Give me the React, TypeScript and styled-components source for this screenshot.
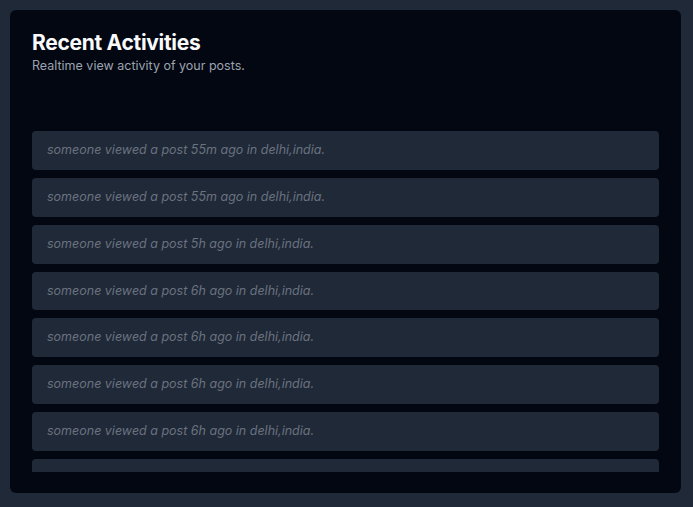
import React from 'react'
import styled, { createGlobalStyle } from 'styled-components'

const GlobalStyle = createGlobalStyle`
  html, body {
    margin: 0;
    padding: 0;
    background: #1f2937;
    font-family: Inter, "Noto Sans", sans-serif;
  }
`

const Page = styled.div`
  box-sizing: border-box;
  height: 507px;
  padding: 10px 12px 14px 10px;
  display: flex;
`

const Card = styled.section`
  flex: 1;
  display: flex;
  flex-direction: column;
  background: #030712;
  border-radius: 6px;
  padding: 19px 22px 21px 22px;
  min-height: 0;
`

const Title = styled.h2`
  margin: 0;
  color: #f9fafb;
  font-size: 21px;
  font-weight: 700;
  line-height: 28px;
  letter-spacing: -0.3px;
`

const Subtitle = styled.p`
  margin: 0;
  color: #9ca3af;
  font-size: 12.5px;
  line-height: 18px;
`

const List = styled.ul`
  list-style: none;
  margin: 56px 0 0 0;
  padding: 0;
  flex: 1;
  min-height: 0;
  overflow: hidden;
  display: flex;
  flex-direction: column;
  gap: 8px;
`

const Item = styled.li`
  flex-shrink: 0;
  background: #1f2937;
  border-radius: 4px;
  padding: 12px 15px;
  color: #6b7280;
  font-size: 12.5px;
  font-style: italic;
  line-height: 14.85px;
`

const activities = ['55m', '55m', '5h', '6h', '6h', '6h', '6h', '6h', '7h']

export default function App() {
  return (
    <>
      <GlobalStyle />
      <Page>
        <Card>
          <Title>Recent Activities</Title>
          <Subtitle>Realtime view activity of your posts.</Subtitle>
          <List>
            {activities.map((t, i) => (
              <Item key={i}>someone viewed a post {t} ago in delhi,india.</Item>
            ))}
          </List>
        </Card>
      </Page>
    </>
  )
}
